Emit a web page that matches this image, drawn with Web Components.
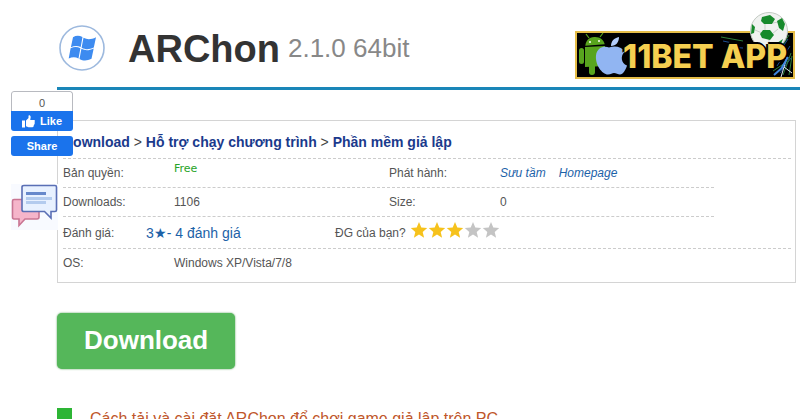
<!DOCTYPE html>
<html lang="vi">
<head>
<meta charset="utf-8">
<meta name="viewport" content="width=device-width, initial-scale=1">
<title>ARChon 2.1.0 64bit</title>
<style>
    body {
        margin: 0;
        background: #fff;
        color: #555;
        font-family: "Liberation Sans", Arial, sans-serif;
        font-size: 12px;
    }
    a {
        color: var(--link-color, #1c62a8);
        text-decoration: none;
    }
    main {
        display: block;
        padding-left: 57px;
    }
</style>
</head>
<body>
<main>
    <app-header>
        ARChon
        <span slot="version">2.1.0 64bit</span>
        <bet-banner slot="banner">11BET APP</bet-banner>
    </app-header>

    <info-panel>
        <crumb-trail slot="trail">
            <a href="#download">Download</a>
            <a href="#programs">Hỗ trợ chạy chương trình</a>
            <a href="#emulators">Phần mềm giả lập</a>
        </crumb-trail>
        <info-row class="short">
            <span slot="label">Bản quyền:</span>
            <free-tag slot="value">Free</free-tag>
            <span slot="label2">Phát hành:</span>
            <source-links slot="value2">
                <a href="#publisher">Sưu tầm</a>
                <a href="#homepage">Homepage</a>
            </source-links>
        </info-row>
        <info-row class="short">
            <span slot="label">Downloads:</span>
            <span slot="value">1106</span>
            <span slot="label2">Size:</span>
            <span slot="value2">0</span>
        </info-row>
        <info-row class="rating">
            <span slot="label">Đánh giá:</span>
            <vote-count slot="value">3★- 4 đánh giá</vote-count>
            <star-rating slot="label2" value="3">ĐG của bạn?</star-rating>
        </info-row>
        <info-row class="last">
            <span slot="label">OS:</span>
            <span slot="value">Windows XP/Vista/7/8</span>
        </info-row>
    </info-panel>

    <download-button>Download</download-button>
    <article-title href="#guide">Cách tải và cài đặt ARChon để chơi game giả lập trên PC</article-title>
</main>
<social-bar count="0"></social-bar>

<template id="app-header">
    <style>
        :host {
            display: flex;
            align-items: center;
            box-sizing: border-box;
            height: 90px;
            padding: 0 5px 0 2px;
            border-bottom: 3px solid #1a86b8;
        }
        .logo {
            flex: none;
            width: 46px;
            height: 46px;
            margin: 8px 23px 0 0;
        }
        h1 {
            display: flex;
            align-items: baseline;
            gap: 8px;
            flex: 1;
            margin: 14px 0 0;
            color: #333;
            font-size: 38px;
            line-height: 44px;
            white-space: nowrap;
        }
        small {
            position: relative;
            bottom: 5px;
            color: #888;
            font-size: 26px;
            font-weight: normal;
        }
    </style>
    <svg class="logo" viewBox="0 0 46 46" aria-hidden="true">
        <circle cx="23" cy="23" r="22" fill="#fff" stroke="#9db9de" stroke-width="1.6"/>
        <g fill="#3d8bf0">
            <path d="M14 12.200c3-1.800 6-2 9.500-.2l-1.800 10c-3.300-1.500-6.400-1.400-9.800.2z"/>
            <path d="M24.500 12.800c3.900 2 7.500 1.900 12.500-.600l-2.200 10.300c-4.800 2.200-8 2.200-12.200.2z"/>
            <path d="M11.600 23.300c3.400-1.700 6.600-1.700 9.800-.1l-1.900 10.300c-3.200-1.600-6.400-1.500-9.800.1z"/>
            <path d="M22.400 23.800c3.900 2 7.500 1.900 12.300-.4l-2.200 10.300c-4.700 2.200-8 2.300-12 .2z"/>
        </g>
    </svg>
    <h1><slot></slot><small><slot name="version"></slot></small></h1>
    <slot name="banner"></slot>
</template>

<template id="bet-banner">
    <style>
        :host {
            display: block;
            flex: none;
            margin-top: 22px;
        }
        a {
            position: relative;
            display: flex;
            align-items: center;
            box-sizing: border-box;
            width: 220px;
            height: 48px;
            border: 2px solid #e5bd48;
            background: #000;
            color: #f5cf50;
            font: 800 32px/44px Inter, "Open Sans", sans-serif;
            text-decoration: none;
            white-space: nowrap;
        }
        svg {
            position: absolute;
            left: -2px;
            bottom: -2px;
            width: 220px;
            height: 68px;
        }
        span {
            position: relative;
            margin-left: 46px;
            padding-top: 4px;
            text-shadow: 2px 0 #000, -2px 0 #000, 0 2px #000, 0 -2px #000;
        }
    </style>
    <a href="#bet">
        <svg viewBox="0 0 220 68" aria-hidden="true">
            <!-- fireworks -->
            <g fill="none" stroke-width="1">
                <path stroke="#1d4f96" d="M148 30l14 3M152 36l16 1M202 55l13-20M205 62l11-15M201 46l12-18"/>
                <path stroke="#2c7f3a" d="M146 26l22 4M198 60l15-10M208 64l8-22M204 40l10-16M214 64l3-19"/>
                <path stroke="#dfe8f5" d="M206 66l6-20M209 56l8 6"/>
                <path stroke="#3f86e0" stroke-width="2" d="M199 64l9-8M206 58l7-12"/>
            </g>
            <!-- robot -->
            <g fill="#58a51e">
                <path d="M10 34c1-5 4-8 9.500-8s9 3 10 8z" transform="rotate(-4 20 30)"/>
                <path d="M14 27l-3-4M25 26l3-4" stroke="#58a51e" stroke-width="1.200"/>
                <path d="M10 36l20-1v20l-20 1z"/>
                <rect x="4" y="37" width="5" height="16" rx="2.500"/>
                <rect x="14" y="50" width="6" height="14" rx="3"/>
            </g>
            <circle cx="15" cy="31" r="1" fill="#fff"/>
            <circle cx="24" cy="30" r="1" fill="#fff"/>
            <!-- apple -->
            <path fill="#91b5f2" d="M34 36.500c-4-2-12-1-13 8-1 9 6 19 12 19 3 0 4-1.500 6-1.500s4 1.500 6 1.500c3 0 6-5 7-9-6-2-7-10-2-14-4-5-10-6-16-4z"/>
            <path fill="#b3cdfa" d="M36 35c0-5 3-8 8-9 0 5-3 9-8 9z"/>
            <!-- football -->
            <circle cx="194" cy="20" r="18.500" fill="#f0f2f0" stroke="#c3cac3"/>
            <path fill="none" stroke="#c9cfc9" d="M190 13l0 7M198 12l5-1M187 22l-7-3M197 23l6-5M194 28l0 6"/>
            <g fill="#178a2c">
                <path d="M187 6l8-2 5 4-3 5-8 0-3-3z"/>
                <path d="M202 10l5-3 3 6-2 7-4-3z"/>
                <path d="M188 19l7 0 4 5-4 5-8-2-2-4z"/>
                <path d="M177 13l3 3-1 6-3 1z"/>
                <path d="M202 32l6-4-2 5-5 4z"/>
            </g>
        </svg>
        <span><slot></slot></span>
    </a>
</template>

<template id="info-panel">
    <style>
        :host {
            display: block;
            margin: 30px 4px 30px 0;
            padding: 0 4px 0 5px;
            border: 1px solid #d4d4d4;
        }
    </style>
    <slot name="trail"></slot>
    <slot></slot>
</template>

<template id="crumb-trail">
    <style>
        :host {
            --link-color: #1a3a8c;
            display: block;
            padding: 12px 0 6px;
            border-bottom: 1px dashed #ccc;
            color: #333;
            font-size: 14px;
            line-height: 19px;
        }
        ::slotted(a) {
            font-weight: bold;
        }
        ::slotted(a:not(:last-child))::after {
            content: " > ";
            color: #444;
            font-weight: normal;
        }
    </style>
    <slot></slot>
</template>

<template id="info-row">
    <style>
        :host {
            display: grid;
            grid-template-columns: 111px 215px 111px 1fr;
            align-items: center;
            min-height: 28px;
            border-bottom: 1px dashed #ccc;
            line-height: 16px;
        }
        :host(.short) {
            margin-right: 77px;
        }
        :host(.rating) {
            grid-template-columns: 83px 189px auto 1fr;
            min-height: 31px;
        }
        :host(.last) {
            min-height: 28px;
            padding-bottom: 5px;
            border-bottom: 0;
        }
    </style>
    <slot name="label"></slot>
    <slot name="value"></slot>
    <slot name="label2"></slot>
    <slot name="value2"></slot>
</template>

<template id="free-tag">
    <style>
        :host {
            display: block;
            padding-bottom: 8px;
            color: #28a428;
            font: 11px/16px "DejaVu Sans", Verdana, sans-serif;
        }
    </style>
    <slot></slot>
</template>

<template id="source-links">
    <style>
        :host {
            display: flex;
            gap: 13px;
            font-style: italic;
        }
    </style>
    <slot></slot>
</template>

<template id="vote-count">
    <style>
        :host {
            display: block;
            color: #1c62a8;
            font-size: 14px;
        }
    </style>
    <slot></slot>
</template>

<template id="star-rating">
    <style>
        :host {
            display: flex;
            align-items: center;
            gap: 4px;
        }
        .stars {
            display: flex;
            padding-bottom: 6px;
        }
        label {
            position: relative;
            display: block;
            width: 18px;
            height: 18px;
            color: #c4c4c4;
            cursor: pointer;
        }
        label.on {
            color: #f6c21c;
        }
        input {
            position: absolute;
            inset: 0;
            margin: 0;
            opacity: 0;
        }
        svg {
            display: block;
            fill: currentColor;
        }
    </style>
    <span id="question"><slot></slot></span>
    <div class="stars" role="radiogroup" aria-labelledby="question"></div>
</template>

<template id="download-button">
    <style>
        :host {
            display: block;
        }
        button {
            display: block;
            padding: 12px 27px 14px;
            border: 0;
            border-radius: 5px;
            background: #55b75a;
            box-shadow: 0 0 2px #4a9a4e;
            color: #fff;
            font: bold 26px/30px "Liberation Sans", Arial, sans-serif;
            cursor: pointer;
        }
    </style>
    <button type="button"><slot></slot></button>
</template>

<template id="article-title">
    <style>
        :host {
            display: block;
            margin-top: 39px;
        }
        h2 {
            display: flex;
            gap: 18px;
            margin: 0;
            font-size: 16px;
            font-weight: normal;
            line-height: 22px;
        }
        h2::before {
            content: "";
            width: 15px;
            height: 22px;
            background: #2db535;
        }
        a {
            color: #c0562a;
            text-decoration: none;
        }
    </style>
    <h2><a><slot></slot></a></h2>
</template>

<template id="social-bar">
    <style>
        /* floats over the left edge of the page */
        :host {
            position: absolute;
            top: 91px;
            left: 11px;
            display: flex;
            flex-direction: column;
            width: 62px;
            font-size: 11px;
        }
        .like {
            border-radius: 3px;
            overflow: hidden;
        }
        .count {
            display: block;
            box-sizing: border-box;
            height: 20px;
            border: 1px solid #b8bac0;
            border-bottom: 0;
            border-radius: 3px 3px 0 0;
            background: #fff;
            color: #555;
            line-height: 22px;
            text-align: center;
        }
        button {
            display: flex;
            align-items: center;
            justify-content: center;
            gap: 5px;
            width: 100%;
            height: 20px;
            padding: 0;
            border: 0;
            background: #1a73ec;
            color: #fff;
            font: bold 11px/20px "Liberation Sans", Arial, sans-serif;
            cursor: pointer;
        }
        .share {
            margin-top: 5px;
            border-radius: 3px;
        }
        .chat {
            display: block;
            width: 47px;
            height: 46px;
            margin-top: 28px;
            background: #f8faff;
        }
        svg {
            display: block;
        }
    </style>
    <div class="like">
        <output class="count"></output>
        <button type="button">
            <svg width="13" height="13" viewBox="0 0 13 13" fill="#fff" aria-hidden="true">
                <path d="M0 5.500h3V12.500H0zM4 5.500L6.500 3V.8C6.500 0 8.700 0 8.700 2.200L8.200 5H11.800C13.200 5 13.200 6.600 12.400 7c.8.600.5 1.700-.3 1.900.5.700.2 1.500-.5 1.700.3.900-.2 1.600-1.100 1.600H6.500L4 11.300z"/>
            </svg>
            Like
        </button>
    </div>
    <button class="share" type="button">Share</button>
    <a class="chat" href="#comments" aria-label="Bình luận">
        <svg width="47" height="46" viewBox="0 0 47 46" aria-hidden="true">
            <path d="M3 15.500H26Q28 15.500 28 17.500V33Q28 35 26 35H14L8 41.500V35H3Q1.500 35 1.500 33V17Q1.500 15.500 3 15.500z" fill="#f5b5ca" stroke="#c97593" stroke-width="1.600"/>
            <path d="M13 1.500H44Q45.500 1.500 45.500 3V26Q45.500 27.500 44 27.500H40V34L33.500 27.500H13Q11 27.500 11 26V3Q11 1.500 13 1.500z" fill="#e8f1ff" stroke="#5a6fb5" stroke-width="1.600"/>
            <path d="M15 9.500H35" stroke="#6688cb" stroke-width="3"/>
            <path d="M15 14.500H41M15 18.500H35" stroke="#b3cbee" stroke-width="3"/>
        </svg>
    </a>
</template>

<script>
  class BaseElement extends HTMLElement {
    constructor() {
      super();
      const template = document.querySelector(`template#${this.localName}`);
      this.attachShadow({ mode: 'open' });
      this.shadowRoot.appendChild(template.content.cloneNode(true));
    }
  }

  ['app-header', 'bet-banner', 'info-panel', 'crumb-trail', 'info-row', 'free-tag',
    'source-links', 'vote-count', 'download-button'].forEach((name) => {
    customElements.define(name, class extends BaseElement {});
  });

  class ArticleTitle extends BaseElement {
    connectedCallback() {
      this.shadowRoot.querySelector('a').href = this.getAttribute('href');
    }
  }
  customElements.define('article-title', ArticleTitle);

  class SocialBar extends BaseElement {
    connectedCallback() {
      this.shadowRoot.querySelector('.count').textContent = this.getAttribute('count');
    }
  }
  customElements.define('social-bar', SocialBar);

  class StarRating extends BaseElement {
    connectedCallback() {
      this.render();
    }

    render() {
      const value = Number(this.getAttribute('value'));
      const stars = this.shadowRoot.querySelector('.stars');
      stars.innerHTML = [1, 2, 3, 4, 5].map(n => `
        <label class="${n <= value ? 'on' : ''}">
          <input type="radio" name="vote" value="${n}" aria-label="${n}" ${n === value ? 'checked' : ''}>
          <svg width="18" height="18" viewBox="0 0 18 18" aria-hidden="true">
            <path d="M9 1l2.300 5.500 5.900.5-4.500 3.900 1.400 5.800L9 13.600l-5.100 3.100 1.400-5.800L.8 7l5.900-.5z"/>
          </svg>
        </label>`).join('');
      stars.onchange = (e) => {
        this.setAttribute('value', e.target.value);
        this.render();
      };
    }
  }
  customElements.define('star-rating', StarRating);
</script>
</body>
</html>
